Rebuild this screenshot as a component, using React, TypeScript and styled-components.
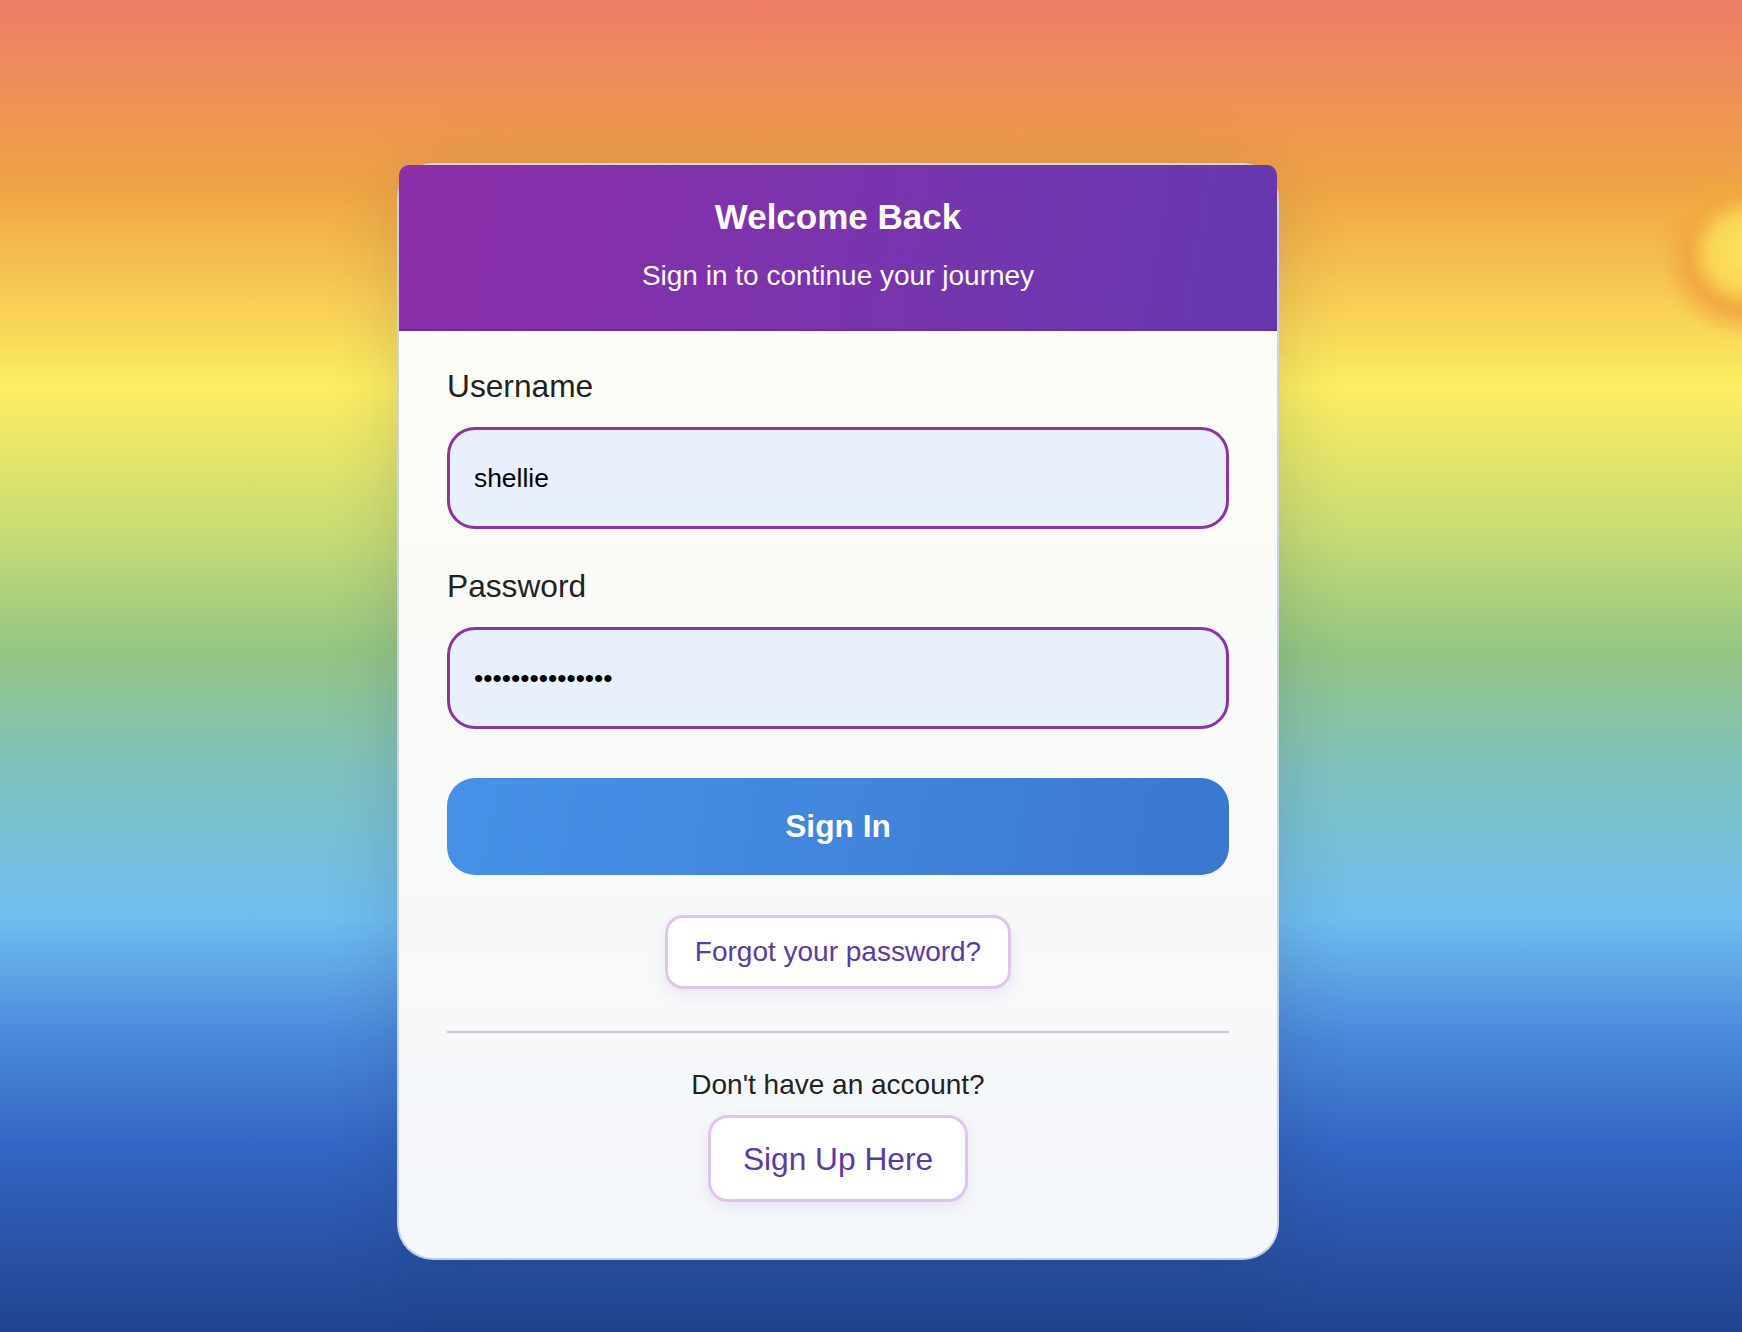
import React, { useState } from "react";
import styled, { createGlobalStyle } from "styled-components";

const GlobalStyle = createGlobalStyle`
  * {
    box-sizing: border-box;
  }
  body {
    margin: 0;
    font-family: "Liberation Sans", Arial, Helvetica, sans-serif;
  }
`;

const App = () => {
  const [username, setUsername] = useState<string>("shellie");
  const [password, setPassword] = useState<string>("supersecret1234");

  return (
    <>
      <GlobalStyle />
      <Page>
        <Sun />
        <Card>
          <Header>
            <Title>Welcome Back</Title>
            <Subtitle>Sign in to continue your journey</Subtitle>
          </Header>
          <Body>
            <Form onSubmit={(e) => e.preventDefault()}>
              <Field>
                <Label htmlFor="username">Username</Label>
                <Input
                  id="username"
                  type="text"
                  value={username}
                  onChange={(e) => setUsername(e.target.value)}
                />
              </Field>
              <Field>
                <Label htmlFor="password">Password</Label>
                <Input
                  id="password"
                  type="password"
                  value={password}
                  onChange={(e) => setPassword(e.target.value)}
                />
              </Field>
              <SubmitButton type="submit">Sign In</SubmitButton>
            </Form>

            <Center>
              <LinkButton size="small">Forgot your password?</LinkButton>
            </Center>

            <Divider />

            <Footer>
              <FooterText>Don't have an account?</FooterText>
              <LinkButton size="large">Sign Up Here</LinkButton>
            </Footer>
          </Body>
        </Card>
      </Page>
    </>
  );
};

export default App;

const Page = styled.div`
  position: relative;
  overflow: hidden;
  min-height: 100vh;
  display: flex;
  justify-content: center;
  align-items: flex-start;
  padding: 163px 66px 0 0;
  background: linear-gradient(
    180deg,
    #ee7c6a 0%,
    #f0a444 14%,
    #f8cf55 23%,
    #fdee61 29%,
    #c8dc74 40%,
    #94c584 49%,
    #7fc2c0 58%,
    #6ebdf0 69%,
    #4a88da 78%,
    #3366c4 86%,
    #21438e 100%
  );
`;

const Sun = styled.div`
  position: absolute;
  left: 1660px;
  top: 168px;
  width: 170px;
  height: 170px;
  border-radius: 50%;
  background: radial-gradient(
    circle closest-side,
    #fde45d 0%,
    #fad656 40%,
    #f4b545 58%,
    #f2a840 68%,
    rgba(242, 168, 64, 0.45) 84%,
    rgba(242, 168, 64, 0) 100%
  );
  filter: blur(1.5px);
`;

const Card = styled.div`
  position: relative;
  width: 882px;
  border: 2px solid;
  border-color: #d4d7db #c9d4e2 #b9cce6 #c9d4e2;
  border-radius: 36px;
  background: linear-gradient(180deg, #fefef5 0%, #f4f7fb 100%);
  box-shadow: 0 12px 70px rgba(30, 40, 70, 0.16);
`;

const Header = styled.div`
  border-radius: 10px 10px 0 0;
  padding: 31px 20px 36px;
  border-bottom: 2px solid #6c2f9b;
  background: linear-gradient(100deg, #8c2ea9 0%, #7a34ad 50%, #6538b0 100%);
  color: #ffffff;
  text-align: center;
`;

const Title = styled.h1`
  margin: 0;
  font-size: 35px;
  line-height: 42px;
  font-weight: 700;
`;

const Subtitle = styled.p`
  margin: 21px 0 0;
  font-size: 28px;
  line-height: 34px;
`;

const Body = styled.div`
  padding: 36px 48px 56px;
  display: flex;
  flex-direction: column;
`;

const Form = styled.form`
  display: flex;
  flex-direction: column;
`;

const Field = styled.div`
  display: flex;
  flex-direction: column;
  margin-bottom: 38px;

  & + & {
    margin-bottom: 49px;
  }
`;

const Label = styled.label`
  font-size: 31.7px;
  line-height: 38px;
  color: #222222;
  margin-bottom: 22px;
`;

const Input = styled.input`
  width: 100%;
  height: 102px;
  padding: 0 24px;
  border: 3px solid #8a34a6;
  border-radius: 28px;
  background: #e8f0fe;
  color: #000000;
  font-family: inherit;
  font-size: 26.4px;
  outline: none;
`;

const SubmitButton = styled.button`
  width: 100%;
  height: 97px;
  border: none;
  border-radius: 28px;
  background: linear-gradient(100deg, #4691e7 0%, #4185dc 50%, #3a77cf 100%);
  color: #ffffff;
  font-family: inherit;
  font-size: 31.7px;
  font-weight: 700;
  cursor: pointer;
`;

const Center = styled.div`
  display: flex;
  justify-content: center;
  margin-top: 40px;
`;

const LinkButton = styled.button<{ size: "small" | "large" }>`
  border: 3px solid #dfc5e9;
  border-radius: ${({ size }) => (size === "large" ? "20px" : "18px")};
  background: #ffffff;
  color: #5b39a7;
  font-family: inherit;
  font-size: ${({ size }) => (size === "large" ? "31.7px" : "28px")};
  line-height: ${({ size }) => (size === "large" ? "38px" : "34px")};
  padding: ${({ size }) => (size === "large" ? "21.5px 32px" : "17px 27px")};
  box-shadow: 0 4px 14px rgba(140, 80, 200, 0.12);
  cursor: pointer;
`;

const Divider = styled.hr`
  width: 100%;
  height: 2px;
  margin: 42px 0 0;
  border: none;
  background: #c8ccd1;
`;

const Footer = styled.div`
  display: flex;
  flex-direction: column;
  align-items: center;
  margin-top: 35px;
  gap: 13px;
`;

const FooterText = styled.p`
  margin: 0;
  font-size: 28px;
  line-height: 34px;
  color: #222222;
`;
